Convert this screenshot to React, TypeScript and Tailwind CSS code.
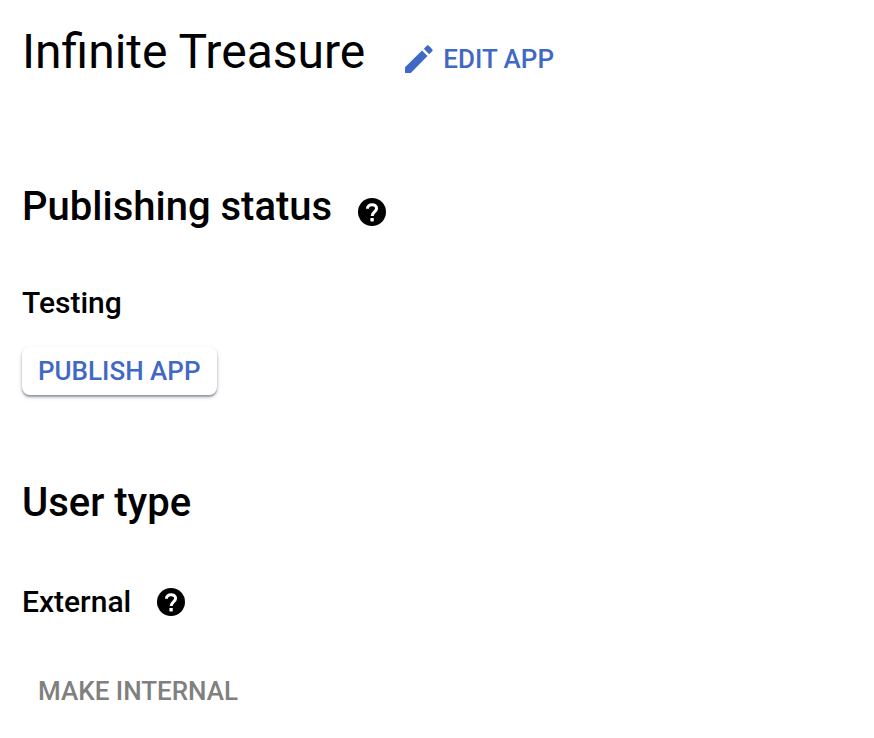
import React from "react";

function HelpButton({ label }: { label: string }) {
  return (
    <button type="button" aria-label={label} className="block shrink-0 text-black">
      <svg viewBox="0 0 28 28" className="block size-7" aria-hidden="true">
        <circle cx="14" cy="14" r="14" fill="currentColor" />
        <path d="M9.4 10.8C9.4 8.2 11.4 6.7 14 6.7S18.6 8.2 18.6 10.6C18.6 13.6 14.2 13.8 14.2 18" fill="none" stroke="white" strokeWidth="3" />
        <rect x="12.4" y="20" width="3.4" height="3.4" rx="0.6" fill="white" />
      </svg>
    </button>
  );
}

export default function App() {
  return (
    <main className="min-h-screen bg-white px-[22px] pt-6 pb-4 font-['Roboto',sans-serif] text-black">
      <header className="flex items-center gap-10">
        <h1 className="text-5xl leading-14">Infinite Treasure</h1>
        <button type="button" className="mt-3.5 flex items-center gap-2.5 text-[26px] leading-8 font-medium text-[#4069c6]">
          <svg viewBox="0 0 28 28" className="size-7" fill="currentColor" aria-hidden="true">
            <path d="M0 28V22.2L17 5.5L22.5 11L5.8 28Z" />
            <path d="M18.8 3.8L22 .6Q22.8 0 23.6 .6L27.4 4.4Q28 5.2 27.4 6L24.2 9.2Z" />
          </svg>
          EDIT APP
        </button>
      </header>

      <section className="mt-[103px]">
        <div className="flex items-end gap-[26px]">
          <h2 className="text-[40px] leading-12 font-medium">Publishing status</h2>
          <div className="pb-[5px]">
            <HelpButton label="About publishing status" />
          </div>
        </div>
        <p className="mt-[54px] text-[30px] leading-9 font-medium">Testing</p>
        <button type="button" className="mt-[26px] h-12 rounded-lg bg-white px-4 text-[26px] leading-8 font-medium text-[#4069c6] shadow-[0_2px_2px_rgba(60,64,80,0.45),0_2px_5px_rgba(60,80,110,0.2)]">
          PUBLISH APP
        </button>
      </section>

      <section className="mt-[84px]">
        <h2 className="text-[40px] leading-12 font-medium">User type</h2>
        <div className="mt-[57px] flex items-center gap-[26px]">
          <p className="text-[30px] leading-9 font-medium">External</p>
          <HelpButton label="About user type" />
        </div>
        <button type="button" disabled className="mt-[47px] h-12 px-4 text-[26px] leading-8 font-medium text-[#808080]">
          MAKE INTERNAL
        </button>
      </section>
    </main>
  );
}
